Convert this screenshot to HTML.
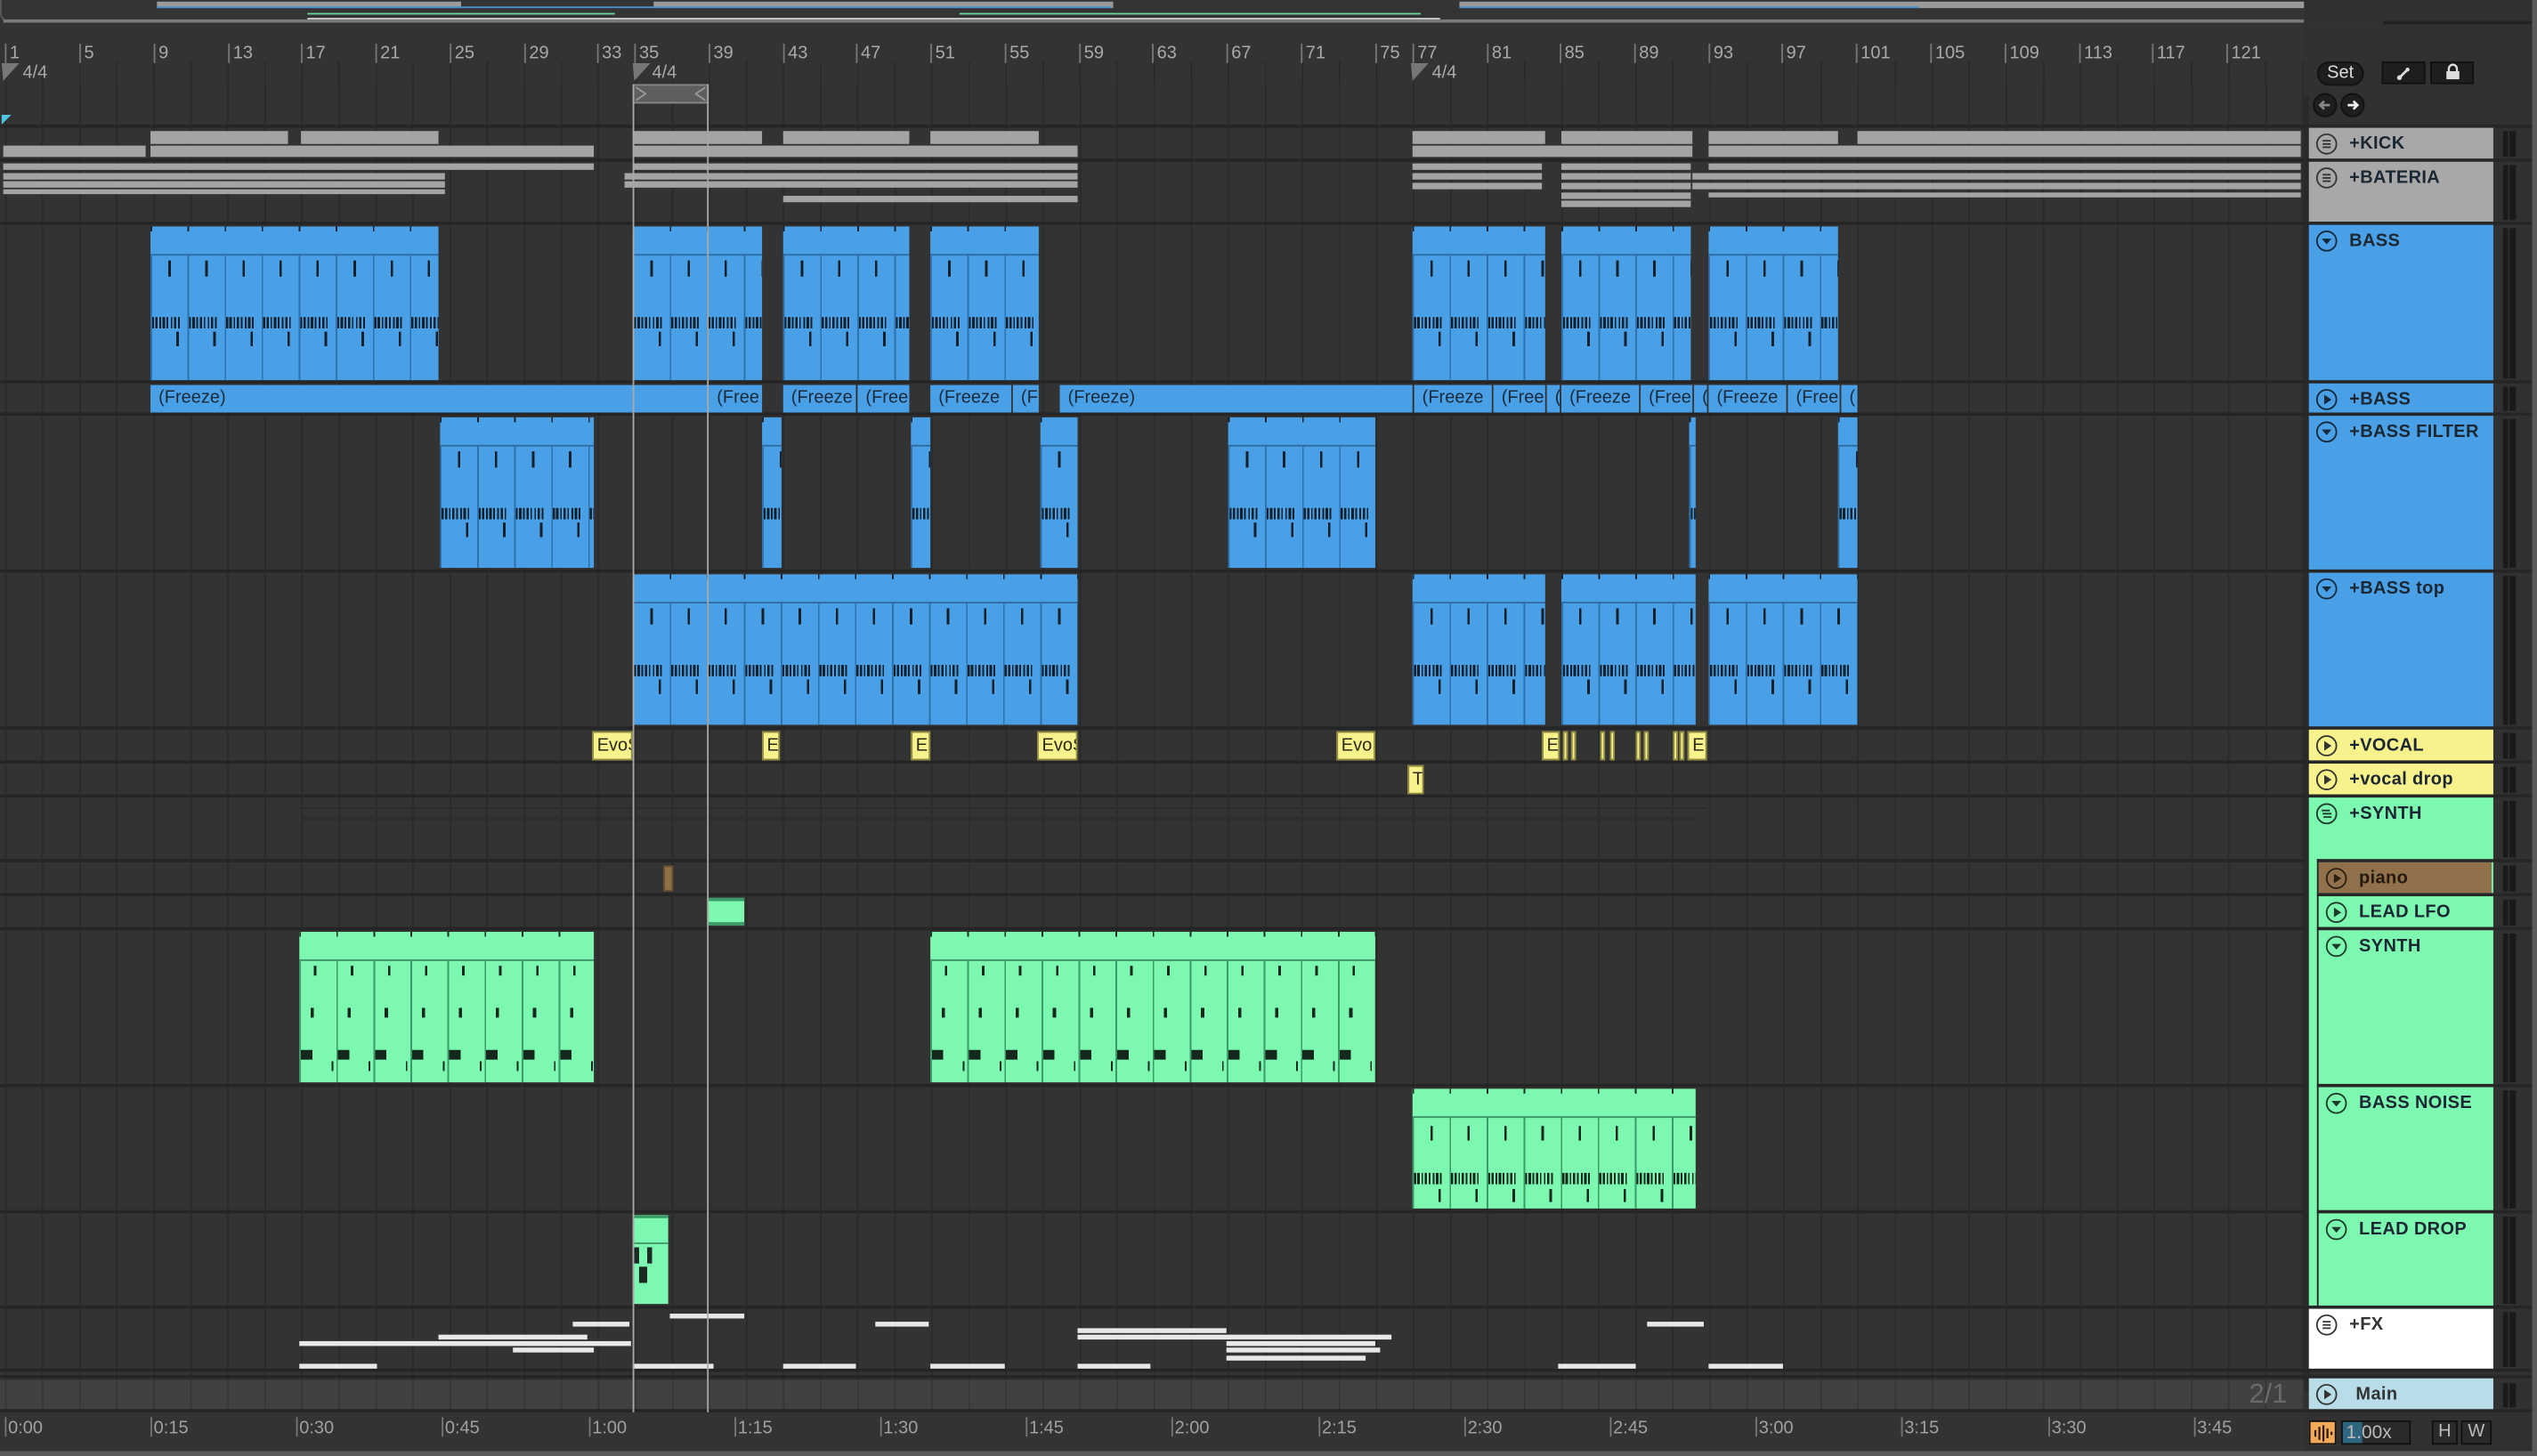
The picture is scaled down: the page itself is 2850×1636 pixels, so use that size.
<!DOCTYPE html>
<html><head><meta charset="utf-8"><style>
*{margin:0;padding:0;box-sizing:border-box}
html,body{width:2850px;height:1636px;overflow:hidden;background:#2b2b2b}
#w{position:absolute;left:0;top:0;width:1568px;height:900px;transform:scale(1.81760,1.81778);transform-origin:0 0;font-family:"Liberation Sans",sans-serif;background:#313131}
.a{position:absolute}
#arr{position:absolute;left:0;top:52px;width:1424px;height:820px;background:#333 repeating-linear-gradient(90deg,#2a2a2a 0 1px,transparent 1px 22.9px);background-position:3px 0}
.sep{position:absolute;left:0;width:1424px;height:2px;background:#252525}
.rn{position:absolute;top:27px;font-size:11px;color:#a9a9a9;border-left:1px solid #777;padding-left:2px;height:12px;line-height:12px}
.tn{position:absolute;top:876px;font-size:11px;color:#a0a0a0;border-left:1px solid #777;padding-left:1px;height:12px;line-height:14px}
.g{position:absolute;background:#a4a4a4}
.c{position:absolute;overflow:hidden}
.mb{background-color:#4aa0e6;background-image:
linear-gradient(#2d6aa3,#2d6aa3),
repeating-linear-gradient(90deg,transparent 0 11px,#12202c 11px 12.5px,transparent 12.5px 22.9px),
repeating-linear-gradient(90deg,transparent 0 1px,#12202c 1px 2.2px,transparent 2.2px 3px,#12202c 3px 4.5px,transparent 4.5px 5.5px,#12202c 5.5px 6.5px,transparent 6.5px 7.5px,#12202c 7.5px 9px,transparent 9px 10px,#12202c 10px 11px,transparent 11px 12.5px,#12202c 12.5px 13.5px,transparent 13.5px 14.5px,#12202c 14.5px 16px,transparent 16px 17px,#12202c 17px 18px,transparent 18px 22.9px),
repeating-linear-gradient(90deg,transparent 0 16px,#12202c 16px 17.5px,transparent 17.5px 22.9px),
repeating-linear-gradient(90deg,#2f72ad 0 1px,transparent 1px 22.9px),
repeating-linear-gradient(90deg,#12202c 0 1px,transparent 1px 22.9px);
background-size:100% 1px,100% 10px,100% 7px,100% 9px,100% 100%,100% 3px;
background-position:0 17px,0 21px,0 56px,0 65px,0 18px,0 0;background-repeat:no-repeat}
.mg{background-color:#7cf8b0;background-image:
linear-gradient(#3b8f62,#3b8f62),
repeating-linear-gradient(90deg,transparent 0 9px,#15281d 9px 10.5px,transparent 10.5px 22.9px),
repeating-linear-gradient(90deg,transparent 0 7px,#15281d 7px 9px,transparent 9px 22.9px),
repeating-linear-gradient(90deg,transparent 0 1px,#15281d 1px 8px,transparent 8px 22.9px),
repeating-linear-gradient(90deg,transparent 0 20px,#15281d 20px 21px,transparent 21px 22.9px),
repeating-linear-gradient(90deg,#3b9a68 0 1px,transparent 1px 22.9px),
repeating-linear-gradient(90deg,#15281d 0 1px,transparent 1px 22.9px);
background-size:100% 1px,100% 6px,100% 6px,100% 6px,100% 6px,100% 100%,100% 3px;
background-position:0 17px,0 21px,0 47px,0 73px,0 80px,0 18px,0 0;background-repeat:no-repeat}
.mn{background-color:#7cf8b0;background-image:
linear-gradient(#3b8f62,#3b8f62),
repeating-linear-gradient(90deg,transparent 0 11px,#15281d 11px 12.5px,transparent 12.5px 22.9px),
repeating-linear-gradient(90deg,transparent 0 1px,#15281d 1px 2.2px,transparent 2.2px 3px,#15281d 3px 4.5px,transparent 4.5px 5.5px,#15281d 5.5px 6.5px,transparent 6.5px 7.5px,#15281d 7.5px 9px,transparent 9px 10px,#15281d 10px 11px,transparent 11px 12.5px,#15281d 12.5px 13.5px,transparent 13.5px 14.5px,#15281d 14.5px 16px,transparent 16px 17px,#15281d 17px 18px,transparent 18px 22.9px),
repeating-linear-gradient(90deg,transparent 0 16px,#15281d 16px 17.5px,transparent 17.5px 22.9px),
repeating-linear-gradient(90deg,#3b9a68 0 1px,transparent 1px 22.9px),
repeating-linear-gradient(90deg,#15281d 0 1px,transparent 1px 22.9px);
background-size:100% 1px,100% 9px,100% 7px,100% 8px,100% 100%,100% 3px;
background-position:0 17px,0 23px,0 52px,0 62px,0 18px,0 0;background-repeat:no-repeat}
.fz{position:absolute;top:238px;height:17px;background:#4aa0e6;font-size:11px;color:#1a2a3a;line-height:17px;padding-left:5px;white-space:nowrap;overflow:hidden}
.y{position:absolute;top:452px;height:18px;background:#f7f28c;border:1px solid #8f8a40;font-size:11px;color:#2a2a10;line-height:16px;padding-left:2px;overflow:hidden;white-space:nowrap}
.wb{position:absolute;height:3px;background:#e8e8e8}
.h{position:absolute;left:1427px;width:113.5px;font-size:11px;font-weight:bold;color:#1b2733;letter-spacing:.2px}
.h span{position:absolute;top:4px;left:25px;white-space:nowrap}
.h svg{position:absolute;top:3px;left:4px}
.m{position:absolute;left:1547px;width:8px;background:repeating-linear-gradient(90deg,#1a1a1a 0 3px,transparent 3px 4px,#1a1a1a 4px 7px,transparent 7px)}
.hs{position:absolute;left:1424px;width:144px;height:2px;background:#262626}
</style></head><body><div id="w">

<div class="a" style="left:0;top:0;width:1473px;height:14px;background:#343434;border:1px solid #5a5a5a;border-top:none;border-radius:0 0 6px 6px"></div>
<div class="a" style="left:2px;top:12px;width:1469px;height:2px;background:#7a7a7a"></div>
<div class="a" style="left:97px;top:1px;width:188px;height:4px;background:#9a9a9a"></div>
<div class="a" style="left:404px;top:1px;width:284px;height:4px;background:#9a9a9a"></div>
<div class="a" style="left:902px;top:1px;width:568px;height:4px;background:#9a9a9a"></div>
<div class="a" style="left:97px;top:4px;width:590px;height:1px;background:#4a90d0"></div>
<div class="a" style="left:902px;top:4px;width:284px;height:1px;background:#4a90d0"></div>
<div class="a" style="left:190px;top:8px;width:190px;height:1px;background:#6ad89a"></div>
<div class="a" style="left:593px;top:8px;width:285px;height:1px;background:#6ad89a"></div>
<div class="a" style="left:190px;top:11px;width:700px;height:1px;background:#cfcfcf"></div>

<div class="a" style="left:0;top:15px;width:1424px;height:37px;background:#333"></div>
<div class="a" style="left:0;top:38px;width:1424px;height:14px;background:#333 repeating-linear-gradient(90deg,#2a2a2a 0 1px,transparent 1px 22.9px);background-position:3px 0"></div>
<div class="rn" style="left:3px">1</div><div class="rn" style="left:49px">5</div><div class="rn" style="left:95px">9</div><div class="rn" style="left:141px">13</div><div class="rn" style="left:186px">17</div><div class="rn" style="left:232px">21</div><div class="rn" style="left:278px">25</div><div class="rn" style="left:324px">29</div><div class="rn" style="left:369px">33</div><div class="rn" style="left:392px">35</div><div class="rn" style="left:438px">39</div><div class="rn" style="left:484px">43</div><div class="rn" style="left:529px">47</div><div class="rn" style="left:575px">51</div><div class="rn" style="left:621px">55</div><div class="rn" style="left:667px">59</div><div class="rn" style="left:712px">63</div><div class="rn" style="left:758px">67</div><div class="rn" style="left:804px">71</div><div class="rn" style="left:850px">75</div><div class="rn" style="left:873px">77</div><div class="rn" style="left:919px">81</div><div class="rn" style="left:964px">85</div><div class="rn" style="left:1010px">89</div><div class="rn" style="left:1056px">93</div><div class="rn" style="left:1101px">97</div><div class="rn" style="left:1147px">101</div><div class="rn" style="left:1193px">105</div><div class="rn" style="left:1239px">109</div><div class="rn" style="left:1285px">113</div><div class="rn" style="left:1330px">117</div><div class="rn" style="left:1376px">121</div>
<div class="a" style="left:14px;top:39px;font-size:11px;color:#aaa">4/4</div>
<div class="a" style="left:403px;top:39px;font-size:11px;color:#aaa">4/4</div>
<div class="a" style="left:885px;top:39px;font-size:11px;color:#aaa">4/4</div>
<svg class="a" style="left:1px;top:39px" width="12" height="12"><path d="M0 0H11L1 11Z" fill="#777"/></svg>
<svg class="a" style="left:391px;top:39px" width="12" height="12"><path d="M0 0H11L1 11Z" fill="#777"/></svg>
<svg class="a" style="left:872px;top:39px" width="12" height="12"><path d="M0 0H11L1 11Z" fill="#777"/></svg>

<div id="arr"></div>
<div class="a" style="left:391px;top:52px;width:47px;height:12px;background:#5e5e5e;border:1px solid #888"></div>
<svg class="a" style="left:391px;top:52px" width="47" height="12"><path d="M2 2L8 6L2 10M45 2L39 6L45 10" stroke="#999" fill="none"/></svg>
<svg class="a" style="left:1px;top:71px" width="6" height="6"><path d="M0 0H6L0 6Z" fill="#4fc3e0"/></svg>
<div class="a" style="left:0;top:853px;width:1424px;height:19px;background:#414141 repeating-linear-gradient(90deg,#363636 0 1px,transparent 1px 22.9px);background-position:3px 0"></div>
<div class="a" style="left:1390px;top:852px;font-size:17px;color:#6a6a6a">2/1</div>

<div class="sep" style="top:77px"></div><div class="sep" style="top:98px"></div><div class="sep" style="top:137px"></div><div class="sep" style="top:235px"></div><div class="sep" style="top:255px"></div><div class="sep" style="top:352px"></div><div class="sep" style="top:449px"></div><div class="sep" style="top:470px"></div><div class="sep" style="top:491px"></div><div class="sep" style="top:531px"></div><div class="sep" style="top:552px"></div><div class="sep" style="top:573px"></div><div class="sep" style="top:670px"></div><div class="sep" style="top:748px"></div><div class="sep" style="top:807px"></div><div class="sep" style="top:846px"></div><div class="sep" style="top:850px"></div><div class="sep" style="top:871px;height:2px"></div>

<div class="g" style="left:93px;top:81px;width:85px;height:8px"></div><div class="g" style="left:186px;top:81px;width:85px;height:8px"></div><div class="g" style="left:391px;top:81px;width:80px;height:8px"></div><div class="g" style="left:484px;top:81px;width:78px;height:8px"></div><div class="g" style="left:575px;top:81px;width:67px;height:8px"></div><div class="g" style="left:873px;top:81px;width:82px;height:8px"></div><div class="g" style="left:965px;top:81px;width:81px;height:8px"></div><div class="g" style="left:1056px;top:81px;width:80px;height:8px"></div><div class="g" style="left:1148px;top:81px;width:274px;height:8px"></div>
<div class="g" style="left:2px;top:90px;width:88px;height:7px"></div><div class="g" style="left:93px;top:90px;width:274px;height:7px"></div><div class="g" style="left:391px;top:90px;width:275px;height:7px"></div><div class="g" style="left:873px;top:90px;width:173px;height:7px"></div><div class="g" style="left:1056px;top:90px;width:366px;height:7px"></div>
<div class="g" style="left:2px;top:101px;width:365px;height:4px"></div><div class="g" style="left:2px;top:107px;width:273px;height:4px"></div><div class="g" style="left:2px;top:112px;width:273px;height:4px"></div><div class="g" style="left:2px;top:117px;width:273px;height:3px"></div>
<div class="g" style="left:391px;top:101px;width:275px;height:4px"></div><div class="g" style="left:386px;top:107px;width:280px;height:4px"></div><div class="g" style="left:386px;top:112px;width:280px;height:4px"></div><div class="g" style="left:484px;top:121px;width:182px;height:4px"></div>
<div class="g" style="left:873px;top:101px;width:80px;height:4px"></div><div class="g" style="left:873px;top:107px;width:80px;height:4px"></div><div class="g" style="left:873px;top:113px;width:80px;height:4px"></div>
<div class="g" style="left:965px;top:101px;width:80px;height:4px"></div><div class="g" style="left:965px;top:107px;width:80px;height:4px"></div><div class="g" style="left:965px;top:113px;width:80px;height:4px"></div><div class="g" style="left:965px;top:119px;width:80px;height:4px"></div><div class="g" style="left:965px;top:124px;width:80px;height:4px"></div>
<div class="g" style="left:1056px;top:101px;width:366px;height:4px"></div><div class="g" style="left:1046px;top:107px;width:376px;height:4px"></div><div class="g" style="left:1046px;top:113px;width:376px;height:4px"></div><div class="g" style="left:1056px;top:119px;width:366px;height:3px"></div>

<div class="c mb" style="left:93px;top:140px;width:178px;height:95px"></div><div class="c mb" style="left:391px;top:140px;width:80px;height:95px"></div><div class="c mb" style="left:484px;top:140px;width:78px;height:95px"></div><div class="c mb" style="left:575px;top:140px;width:67px;height:95px"></div><div class="c mb" style="left:873px;top:140px;width:82px;height:95px"></div><div class="c mb" style="left:965px;top:140px;width:80px;height:95px"></div><div class="c mb" style="left:1056px;top:140px;width:80px;height:95px"></div>
<div class="fz" style="left:93px;width:378px">(Freeze)<span style="position:absolute;left:350px">(Free</span></div>
<div class="fz" style="left:484px;width:45px">(Freeze</div><div class="fz" style="left:530px;width:32px">(Free</div>
<div class="fz" style="left:575px;width:50px">(Freeze</div><div class="fz" style="left:626px;width:16px">(Fr</div>
<div class="fz" style="left:655px;width:218px">(Freeze)</div>
<div class="fz" style="left:874px;width:48px">(Freeze</div><div class="fz" style="left:923px;width:32px">(Free</div><div class="fz" style="left:956px;width:8px">(</div>
<div class="fz" style="left:965px;width:48px">(Freeze</div><div class="fz" style="left:1014px;width:32px">(Free</div><div class="fz" style="left:1047px;width:8px">(</div>
<div class="fz" style="left:1056px;width:48px">(Freeze</div><div class="fz" style="left:1105px;width:32px">(Free</div><div class="fz" style="left:1138px;width:10px">(</div>
<div class="c mb" style="left:272px;top:258px;width:95px;height:93px"></div><div class="c mb" style="left:471px;top:258px;width:12px;height:93px"></div><div class="c mb" style="left:563px;top:258px;width:12px;height:93px"></div><div class="c mb" style="left:643px;top:258px;width:23px;height:93px"></div><div class="c mb" style="left:759px;top:258px;width:91px;height:93px"></div><div class="c mb" style="left:1044px;top:258px;width:4px;height:93px"></div><div class="c mb" style="left:1136px;top:258px;width:12px;height:93px"></div>
<div class="c mb" style="left:391px;top:355px;width:275px;height:93px"></div><div class="c mb" style="left:873px;top:355px;width:82px;height:93px"></div><div class="c mb" style="left:965px;top:355px;width:83px;height:93px"></div><div class="c mb" style="left:1056px;top:355px;width:92px;height:93px"></div>
<div class="y" style="left:366px;width:25px">EvoS</div><div class="y" style="left:471px;width:11px">E</div><div class="y" style="left:563px;width:12px">E</div><div class="y" style="left:641px;width:25px">EvoS</div><div class="y" style="left:826px;width:24px">Evo</div><div class="y" style="left:953px;width:11px">E</div>
<div class="y" style="left:966px;width:3px;padding:0"></div><div class="y" style="left:971px;width:3px;padding:0"></div><div class="y" style="left:989px;width:3px;padding:0"></div><div class="y" style="left:995px;width:3px;padding:0"></div><div class="y" style="left:1011px;width:3px;padding:0"></div><div class="y" style="left:1016px;width:3px;padding:0"></div><div class="y" style="left:1034px;width:3px;padding:0"></div><div class="y" style="left:1038px;width:3px;padding:0"></div>
<div class="y" style="left:1043px;width:12px">E</div>
<div class="y" style="left:870px;top:473px;width:10px">T</div>
<div class="a" style="left:185px;top:499px;width:870px;height:1px;background:#2c2c2c"></div>
<div class="a" style="left:186px;top:505px;width:862px;height:2px;background:#2d2d2d"></div>
<div class="a" style="left:410px;top:535px;width:6px;height:16px;background:#8e7048;border:1px solid #6a5030"></div>
<div class="a" style="left:437px;top:555px;width:23px;height:17px;background:#7cf8b0;border-top:2px solid #3b9a68;border-bottom:2px solid #3b9a68"></div>
<div class="c mg" style="left:185px;top:576px;width:182px;height:93px"></div><div class="c mg" style="left:575px;top:576px;width:275px;height:93px"></div>
<div class="c mn" style="left:873px;top:673px;width:175px;height:74px"></div>
<div class="a" style="left:391px;top:751px;width:22px;height:55px;background:#7cf8b0;border-top:2px solid #3b9a68"></div>
<div class="a" style="left:391px;top:768px;width:22px;height:1px;background:#3b9a68"></div>
<div class="a" style="left:392px;top:771px;width:3px;height:10px;background:#1b2a22"></div><div class="a" style="left:400px;top:771px;width:3px;height:10px;background:#1b2a22"></div><div class="a" style="left:395px;top:783px;width:5px;height:10px;background:#1b2a22"></div>
<div class="wb" style="left:354px;top:817px;width:35px"></div><div class="wb" style="left:414px;top:812px;width:46px"></div><div class="wb" style="left:541px;top:817px;width:33px"></div><div class="wb" style="left:271px;top:825px;width:92px"></div><div class="wb" style="left:185px;top:829px;width:205px"></div><div class="wb" style="left:317px;top:833px;width:50px"></div><div class="wb" style="left:185px;top:843px;width:48px"></div><div class="wb" style="left:391px;top:843px;width:50px"></div><div class="wb" style="left:484px;top:843px;width:45px"></div><div class="wb" style="left:575px;top:843px;width:46px"></div><div class="wb" style="left:666px;top:821px;width:92px"></div><div class="wb" style="left:666px;top:825px;width:194px"></div><div class="wb" style="left:758px;top:829px;width:92px"></div><div class="wb" style="left:758px;top:833px;width:95px"></div><div class="wb" style="left:666px;top:843px;width:45px"></div><div class="wb" style="left:758px;top:838px;width:86px"></div><div class="wb" style="left:1018px;top:817px;width:35px"></div><div class="wb" style="left:963px;top:843px;width:48px"></div><div class="wb" style="left:1056px;top:843px;width:46px"></div>

<div class="a" style="left:390.5px;top:52px;width:1px;height:822px;background:#a8a8a8"></div>
<div class="a" style="left:436.5px;top:52px;width:1px;height:822px;background:#a8a8a8"></div>

<div class="a" style="left:0;top:873px;width:1424px;height:27px;background:#333"></div>
<div class="tn" style="left:3px">0:00</div><div class="tn" style="left:93px">0:15</div><div class="tn" style="left:183px">0:30</div><div class="tn" style="left:273px">0:45</div><div class="tn" style="left:364px">1:00</div><div class="tn" style="left:454px">1:15</div><div class="tn" style="left:544px">1:30</div><div class="tn" style="left:634px">1:45</div><div class="tn" style="left:724px">2:00</div><div class="tn" style="left:815px">2:15</div><div class="tn" style="left:905px">2:30</div><div class="tn" style="left:995px">2:45</div><div class="tn" style="left:1085px">3:00</div><div class="tn" style="left:1175px">3:15</div><div class="tn" style="left:1266px">3:30</div><div class="tn" style="left:1356px">3:45</div>

<div class="a" style="left:1424px;top:15px;width:144px;height:885px;background:#313131"></div>
<div class="a" style="left:1424px;top:0;width:144px;height:14px;background:#303030"></div>
<div class="a" style="left:1473px;top:13px;width:95px;height:2px;background:#222"></div>
<div class="a" style="left:1424px;top:60px;width:3px;height:800px;background:#292929"></div>
<div class="a" style="left:1432px;top:38px;width:29px;height:15px;border-radius:8px;background:#1e1e1e;border:1px solid #111;font-size:11px;color:#ddd;text-align:center;line-height:13px">Set</div>
<div class="a" style="left:1472px;top:38px;width:27px;height:14px;background:#1e1e1e;border:1px solid #111"></div>
<svg class="a" style="left:1480px;top:40px" width="12" height="10"><path d="M3 8L8 3" stroke="#ddd" stroke-width="1.5"/><circle cx="3" cy="8" r="1.5" fill="#ddd"/><circle cx="8" cy="3" r="1.2" fill="#ddd"/></svg>
<div class="a" style="left:1502px;top:38px;width:27px;height:14px;background:#1e1e1e;border:1px solid #111"></div>
<svg class="a" style="left:1510px;top:39px" width="12" height="11"><path d="M3.5 5V3.5a2.5 2.5 0 0 1 5 0V5" stroke="#ddd" fill="none" stroke-width="1.3"/><rect x="2" y="5" width="8" height="5" fill="#ddd"/></svg>
<svg class="a" style="left:1429px;top:57px" width="40" height="16"><circle cx="8" cy="8" r="7" fill="#1e1e1e" stroke="#111"/><path d="M11 8H5M7.5 5.5L5 8L7.5 10.5" stroke="#888" stroke-width="1.5" fill="none"/><circle cx="25" cy="8" r="7" fill="#1e1e1e" stroke="#111"/><path d="M22 8H28M25.5 5.5L28 8L25.5 10.5" stroke="#eee" stroke-width="1.5" fill="none"/></svg>

<div class="hs" style="top:77px"></div><div class="hs" style="top:98px"></div><div class="hs" style="top:137px"></div><div class="hs" style="top:235px"></div><div class="hs" style="top:255px"></div><div class="hs" style="top:352px"></div><div class="hs" style="top:449px"></div><div class="hs" style="top:470px"></div><div class="hs" style="top:491px"></div><div class="hs" style="top:807px"></div><div class="hs" style="top:846px"></div><div class="hs" style="top:850px"></div><div class="hs" style="top:871px"></div>

<div class="h" style="top:79px;height:19px;background:#a8a8a8"><svg width="14" height="14"><circle cx="7" cy="7" r="6" fill="none" stroke="#333"/><path d="M4.5 5H9.5M4.5 7H9.5M4.5 9H9.5" stroke="#333"/></svg><span>+KICK</span></div>
<div class="h" style="top:100px;height:37px;background:#a8a8a8"><svg width="14" height="14"><circle cx="7" cy="7" r="6" fill="none" stroke="#333"/><path d="M4.5 5H9.5M4.5 7H9.5M4.5 9H9.5" stroke="#333"/></svg><span>+BATERIA</span></div>
<div class="h" style="top:139px;height:96px;background:#4aa0e6"><svg width="14" height="14"><circle cx="7" cy="7" r="6" fill="none" stroke="#13283a"/><path d="M4 5.5H10L7 9Z" fill="#13283a"/></svg><span>BASS</span></div>
<div class="h" style="top:237px;height:18px;background:#4aa0e6"><svg width="14" height="14"><circle cx="7" cy="7" r="6" fill="none" stroke="#13283a"/><path d="M5.5 4V10L10 7Z" fill="#13283a"/></svg><span>+BASS</span></div>
<div class="h" style="top:257px;height:95px;background:#4aa0e6"><svg width="14" height="14"><circle cx="7" cy="7" r="6" fill="none" stroke="#13283a"/><path d="M4 5.5H10L7 9Z" fill="#13283a"/></svg><span>+BASS FILTER</span></div>
<div class="h" style="top:354px;height:95px;background:#4aa0e6"><svg width="14" height="14"><circle cx="7" cy="7" r="6" fill="none" stroke="#13283a"/><path d="M4 5.5H10L7 9Z" fill="#13283a"/></svg><span>+BASS top</span></div>
<div class="h" style="top:451px;height:19px;background:#f7f28c"><svg width="14" height="14"><circle cx="7" cy="7" r="6" fill="none" stroke="#333"/><path d="M5.5 4V10L10 7Z" fill="#333"/></svg><span>+VOCAL</span></div>
<div class="h" style="top:472px;height:19px;background:#f7f28c"><svg width="14" height="14"><circle cx="7" cy="7" r="6" fill="none" stroke="#333"/><path d="M5.5 4V10L10 7Z" fill="#333"/></svg><span>+vocal drop</span></div>
<div class="h" style="top:493px;height:314px;background:#7cf8b0"><svg width="14" height="14"><circle cx="7" cy="7" r="6" fill="none" stroke="#1d3a2a"/><path d="M4 5H9M4.5 7H10M5 9H10" stroke="#1d3a2a"/></svg><span>+SYNTH</span></div>
<div class="h" style="left:1433px;width:107px;top:533px;height:19px;background:#91714b"><svg width="14" height="14"><circle cx="7" cy="7" r="6" fill="none" stroke="#2a1e10"/><path d="M5.5 4V10L10 7Z" fill="#2a1e10"/></svg><span style="color:#241a0e">piano</span></div>
<div class="h" style="left:1433px;width:107px;top:554px;height:19px;background:#7cf8b0"><svg width="14" height="14"><circle cx="7" cy="7" r="6" fill="none" stroke="#1d3a2a"/><path d="M5.5 4V10L10 7Z" fill="#1d3a2a"/></svg><span>LEAD LFO</span></div>
<div class="h" style="left:1433px;width:107px;top:575px;height:95px;background:#7cf8b0"><svg width="14" height="14"><circle cx="7" cy="7" r="6" fill="none" stroke="#1d3a2a"/><path d="M4 5.5H10L7 9Z" fill="#1d3a2a"/></svg><span>SYNTH</span></div>
<div class="h" style="left:1433px;width:107px;top:672px;height:76px;background:#7cf8b0"><svg width="14" height="14"><circle cx="7" cy="7" r="6" fill="none" stroke="#1d3a2a"/><path d="M4 5.5H10L7 9Z" fill="#1d3a2a"/></svg><span>BASS NOISE</span></div>
<div class="h" style="left:1433px;width:107px;top:750px;height:57px;background:#7cf8b0"><svg width="14" height="14"><circle cx="7" cy="7" r="6" fill="none" stroke="#1d3a2a"/><path d="M4 5.5H10L7 9Z" fill="#1d3a2a"/></svg><span>LEAD DROP</span></div>
<div class="a" style="left:1431.5px;top:531px;width:1.5px;height:276px;background:#222"></div>
<div class="hs" style="left:1432px;width:136px;top:531px"></div><div class="hs" style="left:1432px;width:136px;top:552px"></div><div class="hs" style="left:1432px;width:136px;top:573px"></div><div class="hs" style="left:1432px;width:136px;top:670px"></div><div class="hs" style="left:1432px;width:136px;top:748px"></div>
<div class="h" style="top:809px;height:37px;background:#fff"><svg width="14" height="14"><circle cx="7" cy="7" r="6" fill="none" stroke="#333"/><path d="M4.5 5H9.5M4.5 7H9.5M4.5 9H9.5" stroke="#333"/></svg><span style="color:#333">+FX</span></div>
<div class="h" style="top:852px;height:19px;background:#b9dde8"><svg width="14" height="14"><circle cx="7" cy="7" r="6" fill="none" stroke="#333"/><path d="M5.5 4V10L10 7Z" fill="#333"/></svg><span style="left:29px;color:#333">Main</span></div>

<div class="m" style="top:81px;height:16px"></div><div class="m" style="top:102px;height:34px"></div><div class="m" style="top:141px;height:93px"></div><div class="m" style="top:239px;height:15px"></div><div class="m" style="top:259px;height:92px"></div><div class="m" style="top:356px;height:92px"></div><div class="m" style="top:453px;height:16px"></div><div class="m" style="top:474px;height:16px"></div><div class="m" style="top:495px;height:35px"></div><div class="m" style="top:535px;height:16px"></div><div class="m" style="top:556px;height:16px"></div><div class="m" style="top:577px;height:92px"></div><div class="m" style="top:674px;height:73px"></div><div class="m" style="top:752px;height:54px"></div><div class="m" style="top:811px;height:34px"></div><div class="m" style="top:855px;height:15px"></div>

<div class="a" style="left:1565px;top:0;width:3px;height:900px;background:#5a5a5a"></div>
<div class="a" style="left:0;top:897px;width:1568px;height:3px;background:#5a5a5a"></div>

<div class="a" style="left:1427px;top:878px;width:17px;height:15px;background:#f3a95a;border:1px solid #111"></div>
<svg class="a" style="left:1429px;top:880px" width="14" height="12"><path d="M2 4V8M4.5 2V10M7 1V11M9.5 3V9M12 5V7" stroke="#2a1a08" stroke-width="1.2"/></svg>
<div class="a" style="left:1447px;top:878px;width:43px;height:15px;background:#2a2a2a;border:1px solid #111"></div>
<div class="a" style="left:1448px;top:879px;width:12px;height:13px;background:#2e6680"></div>
<div class="a" style="left:1450px;top:879px;font-size:11.5px;color:#bbb;line-height:14px">1.00x</div>
<div class="a" style="left:1503px;top:878px;width:16px;height:15px;background:#2a2a2a;border:1px solid #111;font-size:11px;color:#bbb;text-align:center;line-height:13px">H</div>
<div class="a" style="left:1521px;top:878px;width:19px;height:15px;background:#2a2a2a;border:1px solid #111;font-size:11px;color:#bbb;text-align:center;line-height:13px">W</div>
</div></body></html>
